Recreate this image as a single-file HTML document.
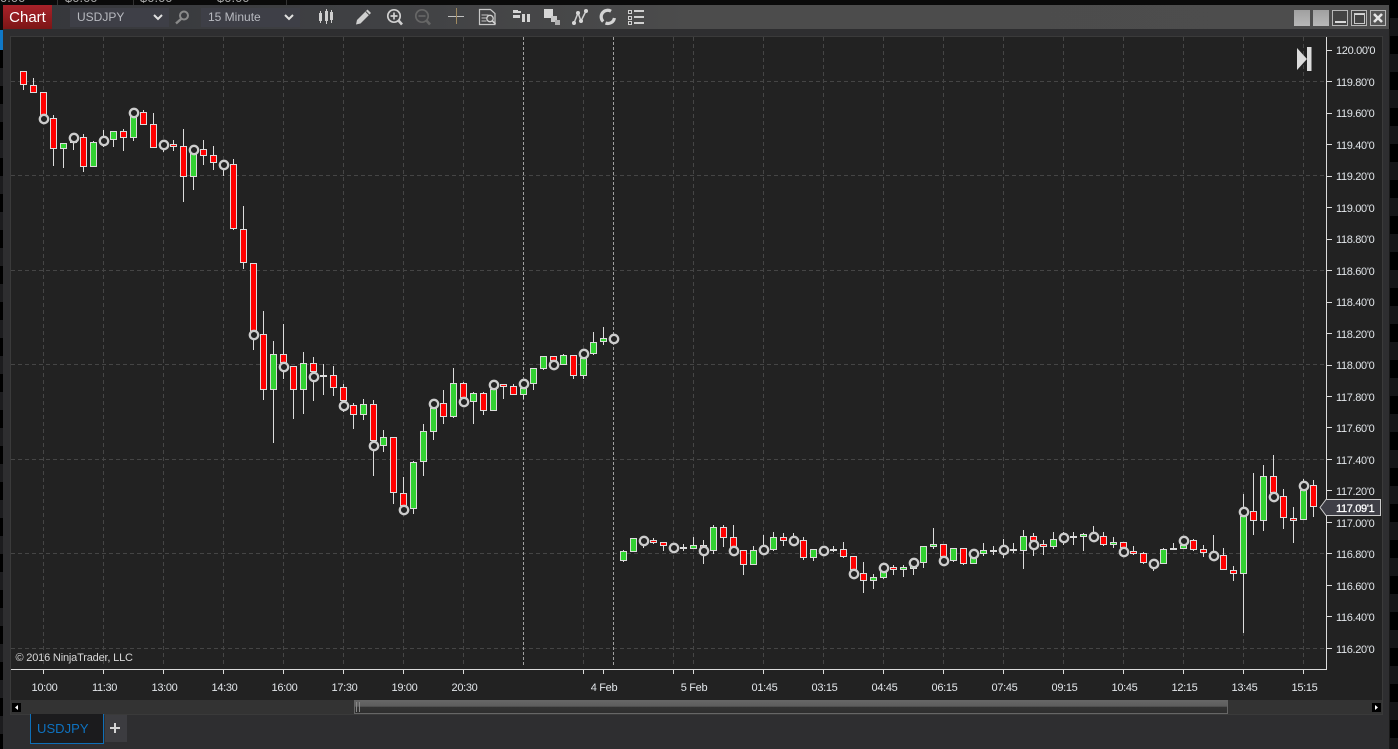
<!DOCTYPE html>
<html>
<head>
<meta charset="utf-8">
<title>USDJPY Chart</title>
<style>
html,body{margin:0;padding:0;width:1398px;height:749px;overflow:hidden;background:#000;font-family:"Liberation Sans",sans-serif}
.a{position:absolute;box-sizing:border-box}
.combo{background:#3e3f47;color:#b8bac0;font-size:12px;line-height:19px;top:8px;height:19px;padding-left:7px}
.top{font-size:13px;color:#aaa;top:-9px;line-height:14px}
.btn{top:10px;width:16px;height:16px}
svg text{font-family:"Liberation Sans",sans-serif;font-size:11px;fill:#e2e6ea;letter-spacing:-.33px}
</style>
</head>
<body>
<div class="a" style="left:0;top:0;width:1398px;height:749px;background:#0a0a0a"></div>
<div class="a" style="left:0;top:50px;width:3px;height:699px;background:repeating-linear-gradient(#000 0 18px,#1c1c1e 18px 36px)"></div>
<div class="a" style="left:0;top:30px;width:3px;height:20px;background:#0f78c8"></div>
<div class="a" style="left:1390px;top:0;width:8px;height:749px;background:repeating-linear-gradient(#000 0 18px,#161618 18px 36px)"></div>
<div class="a" style="left:57px;top:0;width:1px;height:5px;background:#333"></div>
<div class="a" style="left:133px;top:0;width:1px;height:5px;background:#333"></div>
<div class="a" style="left:286px;top:0;width:1px;height:5px;background:#333"></div>
<div class="a top" style="left:0">0.00</div>
<div class="a top" style="left:65px">$0.00</div>
<div class="a top" style="left:140px">$0.00</div>
<div class="a top" style="left:217px">$0.00</div>

<div class="a" style="left:3px;top:29px;width:1386px;height:720px;background:#2e2e30"></div>
<div class="a" style="left:1389px;top:29px;width:1px;height:720px;background:#1a1a1a"></div>
<div class="a" style="left:3px;top:5px;width:1386px;height:24px;background:linear-gradient(90deg,#35363a 0,#3f4043 25%,#4c4c4c 50%,#4d4d4d 100%)"></div>
<div class="a" style="left:3px;top:5px;width:49px;height:24px;background:linear-gradient(#a8222a,#7c1616);color:#fff;font-size:15px;line-height:25px;text-align:center">Chart</div>
<div class="a combo" style="left:70px;width:99px">USDJPY</div>
<div class="a combo" style="left:201px;width:99px">15 Minute</div>

<div class="a btn" style="left:1294px;background:linear-gradient(#a0a0a0,#b8b8b8)"></div>
<div class="a btn" style="left:1313px;background:linear-gradient(#a0a0a0,#b8b8b8)"></div>
<div class="a btn" style="left:1332px;border:1px solid #b8b8b8;background:#444"></div>
<div class="a btn" style="left:1351px;border:1px solid #b8b8b8;background:#444"></div>
<div class="a btn" style="left:1370px;border:1px solid #b8b8b8;background:#555"></div>

<div class="a" style="left:10px;top:36px;width:1373px;height:679px;background:#222;border:1px solid #3a3a3a"></div>
<div class="a" style="left:11px;top:700px;width:1371px;height:14px;background:#333"></div>
<div class="a" style="left:354px;top:700px;width:874px;height:14px;border:1px solid #666;background:linear-gradient(#666 0,#5c5c5c 45%,#333 50%,#2e2e2e 100%)"></div>
<div class="a" style="left:12px;top:703px;width:9px;height:9px;background:#000"></div>
<div class="a" style="left:1372px;top:703px;width:9px;height:9px;background:#000"></div>

<div class="a" style="left:30px;top:714px;width:74px;height:30px;background:#1b1b1d;border:1px solid #0f6fb8;border-top:0;color:#0e72c0;font-size:13px;line-height:29px;padding-left:6px;letter-spacing:.05px">USDJPY</div>
<div class="a" style="left:105px;top:715px;width:22px;height:27px;background:#3c3c40"></div>

<svg class="a" style="left:0;top:0" width="1398" height="749" viewBox="0 0 1398 749">
<!-- window button glyphs -->
<g fill="#d8d8d8" shape-rendering="crispEdges">
<rect x="1335" y="21" width="11" height="2"/>
<rect x="1354" y="13" width="11" height="2"/>
</g>
<rect x="1354.5" y="13.5" width="10" height="10" fill="none" stroke="#c8c8c8" shape-rendering="crispEdges"/>
<path d="M1374 14l8 8M1382 14l-8 8" stroke="#e4e4e4" stroke-width="2.6" fill="none"/>

<!-- combo chevrons -->
<path d="M154 15l4 4 4-4M285 15l4 4 4-4" fill="none" stroke="#e0e0e0" stroke-width="2"/>
<!-- search -->
<circle cx="184" cy="15.5" r="4" fill="none" stroke="#8a8a8a" stroke-width="2"/>
<path d="M181 19l-5 4.500" stroke="#8a8a8a" stroke-width="2.400" fill="none"/>
<!-- candle icon -->
<g fill="#cfcfcf" shape-rendering="crispEdges">
<rect x="319" y="13" width="3" height="8"/><rect x="320" y="11" width="1" height="12"/>
<rect x="325" y="11" width="3" height="10"/><rect x="326" y="9" width="1" height="15"/>
<rect x="330" y="12" width="3" height="8"/><rect x="331" y="10" width="1" height="13"/>
</g>
<!-- pencil -->
<path d="M357 20L367.500 9.500 371 13 360.500 23.500 356 24.500z" fill="#cfcfcf"/>
<path d="M365.800 11.500l3.500 3.500" stroke="#4c4c4c" stroke-width="1" fill="none"/>
<!-- zoom in -->
<circle cx="394" cy="16" r="6.200" fill="none" stroke="#d0d0d0" stroke-width="1.700"/>
<path d="M390.500 16h7M394 12.500v7" stroke="#d0d0d0" stroke-width="1.700" fill="none"/>
<path d="M398.500 20.500l3.500 4" stroke="#d0d0d0" stroke-width="2.600" fill="none"/>
<!-- zoom out -->
<circle cx="422" cy="16" r="6.200" fill="none" stroke="#666" stroke-width="1.700"/>
<path d="M418.500 16h7" stroke="#666" stroke-width="1.700" fill="none"/>
<path d="M426.500 20.500l3.500 4" stroke="#666" stroke-width="2.600" fill="none"/>
<!-- crosshair -->
<path d="M448 16.500h16" stroke="#c0c0c0" shape-rendering="crispEdges"/>
<path d="M456.500 8v16" stroke="#a08a60" shape-rendering="crispEdges"/>
<!-- data box -->
<path d="M479.500 9.500h11l4.500 4v11h-15.500z" fill="none" stroke="#c8c8c8" stroke-width="1.200"/>
<path d="M481.500 15h7M481.500 18h5M481.500 21h5" stroke="#c8c8c8" fill="none"/>
<circle cx="490" cy="18.500" r="3.200" fill="#4c4c4c" stroke="#d0d0d0" stroke-width="1.300"/>
<path d="M492.500 21l3 3" stroke="#d0d0d0" stroke-width="1.600" fill="none"/>
<!-- bars -->
<g fill="#d4d4d4" shape-rendering="crispEdges">
<rect x="513" y="10" width="5" height="3"/><rect x="513" y="15" width="7" height="3"/><rect x="518" y="11" width="3" height="2"/>
<rect x="522" y="14" width="3" height="8"/><rect x="527" y="14" width="3" height="8"/>
</g>
<!-- layers -->
<g shape-rendering="crispEdges">
<rect x="544" y="9" width="9" height="9" fill="#d8d8d8"/>
<rect x="551" y="16" width="6" height="6" fill="#c8c8c8"/>
<rect x="555" y="20" width="5" height="5" fill="#b0b0b0"/>
</g>
<!-- drawing tools -->
<path d="M574 23l4-10 3 8 5-10" fill="none" stroke="#d0d0d0" stroke-width="1.500"/>
<g fill="#d8d8d8"><circle cx="574" cy="23" r="2"/><circle cx="578" cy="13" r="2"/><circle cx="581" cy="21" r="2"/><circle cx="586" cy="11" r="2"/></g>
<!-- circular -->
<path d="M611 11.200A6.500 6.500 0 0 0 603.200 21.500M605.500 23A6.500 6.500 0 0 0 614.400 18" fill="none" stroke="#d4d4d4" stroke-width="3.200"/>
<!-- list -->
<g shape-rendering="crispEdges">
<path d="M628.500 10.500h3v3h-3zM628.500 16.500h3v3h-3zM628.500 21.500h3v3h-3z" fill="none" stroke="#d0d0d0"/>
<rect x="634" y="10" width="10" height="2" fill="#d0d0d0"/><rect x="634" y="16" width="10" height="2" fill="#d0d0d0"/><rect x="634" y="22" width="10" height="2" fill="#d0d0d0"/>
</g>

<!-- grid -->
<g stroke="#454545" stroke-dasharray="4 3" fill="none" shape-rendering="crispEdges">
<path d="M11 81.500H1326M11 175.500H1326M11 270.500H1326M11 364.500H1326M11 459.500H1326M11 553.500H1326M11 648.500H1326"/>
<path d="M43.500 37V667M103.500 37V667M163.500 37V667M223.500 37V667M283.500 37V667M343.500 37V667M403.500 37V667M463.500 37V667M583.500 37V667M673.500 37V667M693.500 37V667M763.500 37V667M823.500 37V667M883.500 37V667M943.500 37V667M1003.500 37V667M1063.500 37V667M1123.500 37V667M1183.500 37V667M1243.500 37V667M1303.500 37V667"/>
</g>
<path d="M523.500 37V667M613.500 37V667" stroke="#a0a0a0" stroke-dasharray="3 2" fill="none" shape-rendering="crispEdges"/>

<!-- axes -->
<g stroke="#dcdcdc" fill="none" shape-rendering="crispEdges">
<path d="M1326.500 37V670M11 669.500H1327"/>
<path d="M1327 50.500h5M1327 81.500h5M1327 113.500h5M1327 144.500h5M1327 176.500h5M1327 207.500h5M1327 239.500h5M1327 270.500h5M1327 302.500h5M1327 333.500h5M1327 365.500h5M1327 396.500h5M1327 427.500h5M1327 459.500h5M1327 490.500h5M1327 522.500h5M1327 553.500h5M1327 585.500h5M1327 616.500h5M1327 648.500h5"/>
<path d="M43.500 670v4M103.500 670v4M163.500 670v4M223.500 670v4M283.500 670v4M343.500 670v4M403.500 670v4M463.500 670v4M583.500 670v4M603.500 670v4M673.500 670v4M693.500 670v4M763.500 670v4M823.500 670v4M883.500 670v4M943.500 670v4M1003.500 670v4M1063.500 670v4M1123.500 670v4M1183.500 670v4M1243.500 670v4M1303.500 670v4"/>
</g>

<!-- wicks -->
<path shape-rendering="crispEdges" stroke="#dcdcdc" fill="none" d="M23.500 71V90M33.500 78V93M53.500 115V166M63.500 143V168M73.500 140V150M83.500 134V172M93.500 141V167M103.500 130V147M113.500 131V147M123.500 129V151M133.500 116V141M143.500 110V125M153.500 113V148M163.500 145V152M173.500 140V151M183.500 129V202M193.500 153V190M203.500 140V165M213.500 146V170M223.500 165V176M233.500 159V230M243.500 206V269M253.500 263V350M263.500 311V400M273.500 341V443M283.500 324V379M293.500 366V419M303.500 352V414M313.500 357V401M323.500 364V395M333.500 366V396M343.500 384V412M353.500 403V429M363.500 399V420M373.500 400V476M383.500 430V452M393.500 437V504M403.500 477V510M413.500 461V514M423.500 424V476M433.500 408V440M443.500 390V424M453.500 368V418M463.500 382V402M473.500 392V424M483.500 392V415M493.500 385V411M503.500 384V399M513.500 384V395M523.500 384V399M533.500 368V390M543.500 356V370M553.500 356V365M563.500 354V365M573.500 355V379M583.500 354V379M593.500 332V355M603.500 327V345M623.500 550V562M633.500 538V552M643.500 541V548M653.500 538V544M663.500 542V551M683.500 544V551M693.500 537V549M703.500 540V564M713.500 525V554M723.500 525V547M733.500 525V551M743.500 550V575M753.500 546V565M763.500 535V555M773.500 532V551M783.500 533V546M793.500 533V541M803.500 537V560M813.500 549V561M833.500 546V552M843.500 542V558M853.500 556V578M863.500 562V593M873.500 574V589M883.500 571V579M893.500 565V575M903.500 565V577M913.500 558V575M923.500 546V568M933.500 528V549M943.500 544V561M953.500 548V562M963.500 548V565M973.500 557V564M983.500 543V556M993.500 546V555M1003.500 539V558M1013.500 543V553M1023.500 530V569M1033.500 533V556M1043.500 540V555M1053.500 532V549M1063.500 532V545M1073.500 532V545M1083.500 533V551M1093.500 526V537M1103.500 532V546M1113.500 537V548M1123.500 542V552M1133.500 546V555M1143.500 552V564M1153.500 564V571M1163.500 548V564M1173.500 543V550M1183.500 541V549M1193.500 539V551M1203.500 545V557M1213.500 535V556M1223.500 548V570M1233.500 566V581M1243.500 494V633M1253.500 473V535M1263.500 465V531M1273.500 455V497M1283.500 489V529M1293.500 507V543M1303.500 479V520M1313.500 480V517"/>

<!-- red bodies -->
<path shape-rendering="crispEdges" fill="#ff0000" stroke="#dcdcdc" d="M20.500 71.500h6v13h-6zM30.500 85.500h6v7h-6zM40.500 92.500h6v25h-6zM50.500 118.500h6v30h-6zM80.500 137.500h6v29h-6zM120.500 131.500h6v6h-6zM140.500 112.500h6v12h-6zM150.500 124.500h6v23h-6zM170.500 144.500h6v2h-6zM180.500 146.500h6v30h-6zM200.500 149.500h6v6h-6zM210.500 155.500h6v7h-6zM230.500 164.500h6v64h-6zM240.500 229.500h6v33h-6zM250.500 263.500h6v68h-6zM260.500 334.500h6v55h-6zM280.500 354.500h6v8h-6zM290.500 366.500h6v23h-6zM310.500 363.500h6v8h-6zM330.500 375.500h6v12h-6zM340.500 387.500h6v13h-6zM350.500 405.500h6v9h-6zM370.500 404.500h6v36h-6zM390.500 437.500h6v55h-6zM400.500 493.500h6v12h-6zM440.500 403.500h6v13h-6zM460.500 383.500h6v14h-6zM480.500 393.500h6v17h-6zM500.500 384.500h6v2h-6zM510.500 386.500h6v8h-6zM550.500 356.500h6v4h-6zM570.500 355.500h6v20h-6zM650.500 540.500h6v2h-6zM660.500 542.500h6v3h-6zM700.500 545.500h6v2h-6zM720.500 527.500h6v10h-6zM730.500 537.500h6v10h-6zM740.500 550.500h6v14h-6zM780.500 537.500h6v3h-6zM800.500 540.500h6v17h-6zM840.500 549.500h6v7h-6zM850.500 556.500h6v13h-6zM860.500 573.500h6v7h-6zM890.500 567.500h6v2h-6zM940.500 544.500h6v12h-6zM960.500 548.500h6v15h-6zM1030.500 536.500h6v4h-6zM1040.500 544.500h6v2h-6zM1100.500 536.500h6v8h-6zM1120.500 542.500h6v5h-6zM1130.500 551.500h6v2h-6zM1140.500 553.500h6v9h-6zM1190.500 540.500h6v9h-6zM1200.500 549.500h6v3h-6zM1220.500 555.500h6v14h-6zM1230.500 570.500h6v3h-6zM1250.500 511.500h6v9h-6zM1270.500 476.500h6v16h-6zM1280.500 496.500h6v21h-6zM1290.500 518.500h6v2h-6zM1310.500 485.500h6v21h-6z"/>

<!-- green bodies -->
<path shape-rendering="crispEdges" fill="#32d232" stroke="#dcdcdc" d="M60.500 143.500h6v5h-6zM70.500 140.500h6v2h-6zM90.500 142.500h6v24h-6zM110.500 131.500h6v8h-6zM130.500 116.500h6v21h-6zM190.500 153.500h6v23h-6zM270.500 354.500h6v35h-6zM300.500 363.500h6v26h-6zM360.500 404.500h6v10h-6zM380.500 437.500h6v8h-6zM410.500 462.500h6v46h-6zM420.500 431.500h6v30h-6zM430.500 408.500h6v23h-6zM450.500 383.500h6v33h-6zM470.500 393.500h6v8h-6zM490.500 389.500h6v21h-6zM520.500 388.500h6v6h-6zM530.500 368.500h6v15h-6zM540.500 356.500h6v12h-6zM560.500 355.500h6v9h-6zM580.500 358.500h6v17h-6zM590.500 342.500h6v11h-6zM600.500 338.500h6v3h-6zM620.500 551.500h6v9h-6zM630.500 538.500h6v13h-6zM690.500 545.500h6v3h-6zM710.500 527.500h6v23h-6zM750.500 550.500h6v14h-6zM770.500 537.500h6v12h-6zM810.500 549.500h6v8h-6zM870.500 577.500h6v3h-6zM880.500 571.500h6v6h-6zM900.500 567.500h6v2h-6zM910.500 566.500h6v2h-6zM920.500 546.500h6v16h-6zM930.500 544.500h6v2h-6zM950.500 548.500h6v12h-6zM970.500 557.500h6v6h-6zM980.500 550.500h6v3h-6zM1020.500 536.500h6v14h-6zM1050.500 539.500h6v7h-6zM1080.500 534.500h6v2h-6zM1110.500 542.500h6v2h-6zM1160.500 549.500h6v14h-6zM1180.500 545.500h6v3h-6zM1240.500 516.500h6v57h-6zM1260.500 476.500h6v44h-6zM1300.500 490.500h6v29h-6z"/>

<!-- dojis -->
<path shape-rendering="crispEdges" stroke="#dcdcdc" stroke-width="2" fill="none" d="M320 376h7M680 548h7M830 550h7M990 551h7M1010 550h7M1070 537h7M1170 549h7"/>

<!-- markers -->
<g fill="#222" stroke="#cccccc" stroke-width="2.300">
<circle cx="44" cy="119" r="4.200"/><circle cx="74" cy="138" r="4.200"/><circle cx="104" cy="141" r="4.200"/><circle cx="134" cy="113" r="4.200"/><circle cx="164" cy="145" r="4.200"/><circle cx="194" cy="150" r="4.200"/><circle cx="224" cy="165" r="4.200"/><circle cx="254" cy="335" r="4.200"/><circle cx="284" cy="367" r="4.200"/><circle cx="314" cy="377" r="4.200"/><circle cx="344" cy="406" r="4.200"/><circle cx="374" cy="446" r="4.200"/><circle cx="404" cy="510" r="4.200"/><circle cx="434" cy="404" r="4.200"/><circle cx="464" cy="402" r="4.200"/><circle cx="494" cy="385" r="4.200"/><circle cx="524" cy="384" r="4.200"/><circle cx="554" cy="365" r="4.200"/><circle cx="584" cy="354" r="4.200"/><circle cx="614" cy="339" r="4.200"/><circle cx="644" cy="541" r="4.200"/><circle cx="674" cy="548" r="4.200"/><circle cx="704" cy="551" r="4.200"/><circle cx="734" cy="551" r="4.200"/><circle cx="764" cy="550" r="4.200"/><circle cx="794" cy="541" r="4.200"/><circle cx="824" cy="551" r="4.200"/><circle cx="854" cy="574" r="4.200"/><circle cx="884" cy="568" r="4.200"/><circle cx="914" cy="563" r="4.200"/><circle cx="944" cy="561" r="4.200"/><circle cx="974" cy="554" r="4.200"/><circle cx="1004" cy="550" r="4.200"/><circle cx="1034" cy="545" r="4.200"/><circle cx="1064" cy="538" r="4.200"/><circle cx="1094" cy="537" r="4.200"/><circle cx="1124" cy="552" r="4.200"/><circle cx="1154" cy="564" r="4.200"/><circle cx="1184" cy="541" r="4.200"/><circle cx="1214" cy="556" r="4.200"/><circle cx="1244" cy="512" r="4.200"/><circle cx="1274" cy="497" r="4.200"/><circle cx="1304" cy="486" r="4.200"/>
</g>

<!-- skip icon -->
<path d="M1297 48l10 11-10 11z" fill="#dcdcdc"/>
<rect x="1307" y="47" width="4.500" height="24" fill="#dcdcdc"/>

<!-- y labels -->
<text x="1336" y="54">120.00'0</text><text x="1336" y="86">119.80'0</text><text x="1336" y="117">119.60'0</text><text x="1336" y="149">119.40'0</text><text x="1336" y="180">119.20'0</text><text x="1336" y="212">119.00'0</text><text x="1336" y="243">118.80'0</text><text x="1336" y="275">118.60'0</text><text x="1336" y="306">118.40'0</text><text x="1336" y="338">118.20'0</text><text x="1336" y="369">118.00'0</text><text x="1336" y="401">117.80'0</text><text x="1336" y="432">117.60'0</text><text x="1336" y="464">117.40'0</text><text x="1336" y="495">117.20'0</text><text x="1336" y="527">117.00'0</text><text x="1336" y="558">116.80'0</text><text x="1336" y="590">116.60'0</text><text x="1336" y="621">116.40'0</text><text x="1336" y="653">116.20'0</text>

<!-- price marker -->
<path d="M1320 507.500l6-8h54.500v16H1326z" fill="#3e3e46" stroke="#cccccc"/>
<text x="1336" y="512" style="fill:#fff;stroke:#fff;stroke-width:.3px">117.09'1</text>

<!-- x labels -->
<g text-anchor="middle">
<text x="44.500" y="691">10:00</text><text x="104.500" y="691">11:30</text><text x="164.500" y="691">13:00</text><text x="224.500" y="691">14:30</text><text x="284.500" y="691">16:00</text><text x="344.500" y="691">17:30</text><text x="404.500" y="691">19:00</text><text x="464.500" y="691">20:30</text><text x="604" y="691">4 Feb</text><text x="694" y="691">5 Feb</text><text x="764.500" y="691">01:45</text><text x="824.500" y="691">03:15</text><text x="884.500" y="691">04:45</text><text x="944.500" y="691">06:15</text><text x="1004.500" y="691">07:45</text><text x="1064.500" y="691">09:15</text><text x="1124.500" y="691">10:45</text><text x="1184.500" y="691">12:15</text><text x="1244.500" y="691">13:45</text><text x="1304.500" y="691">15:15</text>
</g>
<text x="15.500" y="661" style="letter-spacing:-.18px;fill:#d8d8d8">© 2016 NinjaTrader, LLC</text>

<!-- scroll arrows, grip, plus -->
<path d="M18 705l-3 2.500 3 2.500z" fill="#fff"/>
<path d="M1375 705l3 2.500-3 2.500z" fill="#fff"/>
<path d="M356.500 702v10M359.500 702v10" stroke="#888" fill="none" shape-rendering="crispEdges"/>
<path d="M110 728h10M115 723v10" stroke="#d4d4d4" stroke-width="2" fill="none" shape-rendering="crispEdges"/>
</svg>
</body>
</html>
